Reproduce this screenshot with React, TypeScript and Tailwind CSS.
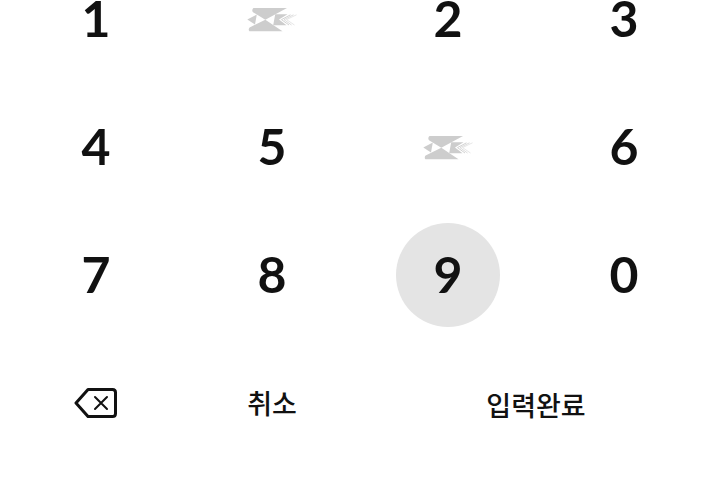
import React from 'react';

type Key = { kind: 'digit'; value: string; active?: boolean } | { kind: 'blank'; id: string };

const keys: Key[] = [
  { kind: 'digit', value: '1' },
  { kind: 'blank', id: 'blank-1' },
  { kind: 'digit', value: '2' },
  { kind: 'digit', value: '3' },
  { kind: 'digit', value: '4' },
  { kind: 'digit', value: '5' },
  { kind: 'blank', id: 'blank-2' },
  { kind: 'digit', value: '6' },
  { kind: 'digit', value: '7' },
  { kind: 'digit', value: '8' },
  { kind: 'digit', value: '9', active: true },
  { kind: 'digit', value: '0' },
];

function BirdLogo() {
  return (
    <svg width="50" height="26" viewBox="0 -2 50 26" aria-hidden="true">
      <g fill="#cdcdcd">
        <path d="M6.5 0H40L18.3 11.7 6 4.2C5 3.4 5 1.2 6.5 0Z" />
        <path d="M18.3 11.7 35.5 23.3H2.4C1.4 22.4 1.6 20.3 2.6 19.4Z" />
        <path d="M0.3 11.6 9.8 6.6 8 16.6Z" />
        <path d="M28.2 6.3H40.5L32 11.5 39.5 17.3H26.2Z" />
      </g>
      <g fill="none" stroke="#cdcdcd">
        <path d="M43.5 6.8 34.5 11.6 42 17" strokeWidth="0.9" />
        <path d="M46.5 6.8 37 11.6 44.5 17" strokeWidth="0.7" />
        <path d="M49.5 6.8 39.5 11.6 47.5 17" strokeWidth="0.5" />
      </g>
    </svg>
  );
}

function BackspaceIcon() {
  return (
    <svg width="44" height="32" viewBox="0 0 44 32" fill="none" stroke="#111" aria-hidden="true">
      <path
        d="M14 2.5H38.5Q41.5 2.5 41.5 5.5V26.5Q41.5 29.5 38.5 29.5H14L2 16Z"
        strokeWidth="3"
        strokeLinejoin="round"
      />
      <path d="M21 10 33 22M33 10 21 22" strokeWidth="2" strokeLinecap="round" />
    </svg>
  );
}

const actionText =
  "font-['Noto_Sans_CJK_KR',sans-serif] text-[27px] leading-10 font-medium";

export default function App() {
  return (
    <main className="overflow-hidden bg-white px-2 font-['Lato',sans-serif] text-[#111]">
      <div className="-mt-[45px] grid auto-rows-[128px] grid-cols-4 place-items-center">
        {keys.map((key) =>
          key.kind === 'digit' ? (
            <button
              key={key.value}
              type="button"
              className={
                'flex size-[104px] items-center justify-center rounded-full pb-0.5 text-[50px] leading-9 font-bold ' +
                (key.active ? 'bg-[#e4e4e4]' : '')
              }
            >
              {key.value}
            </button>
          ) : (
            <div key={key.id} className="flex size-[104px] items-center justify-center">
              <BirdLogo />
            </div>
          ),
        )}
        <button type="button" aria-label="지우기" className="flex size-[104px] items-center justify-center">
          <BackspaceIcon />
        </button>
        <button type="button" className={'h-[104px] px-4 ' + actionText}>
          취소
        </button>
        <button type="button" className={'col-span-2 h-[104px] px-4 pt-1 ' + actionText}>
          입력완료
        </button>
      </div>
    </main>
  );
}
